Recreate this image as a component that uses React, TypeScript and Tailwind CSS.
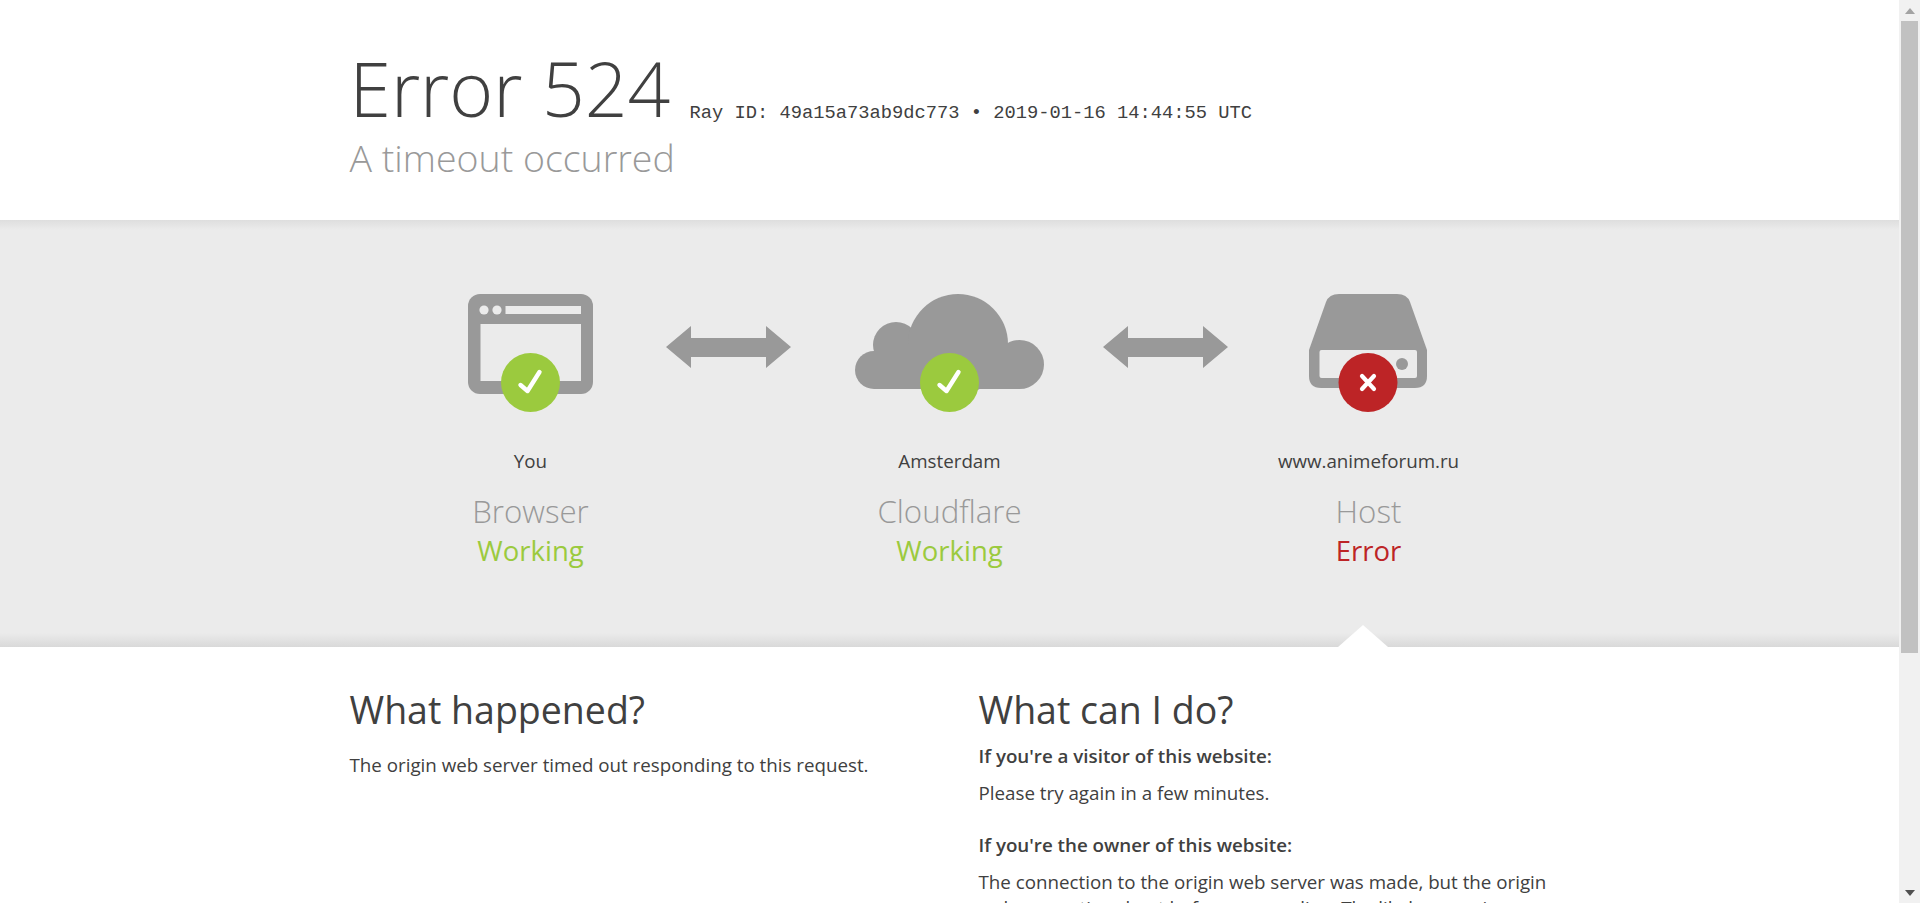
export default function App() {
  return (
    <div className="flex h-screen overflow-hidden bg-white font-['Open_Sans',sans-serif] text-[#404040]">
      <main className="h-full w-[1899px] shrink-0 overflow-hidden">
        {/* HEADER */}
        <header className="h-[220px] pt-[61px]">
          <div className="mx-auto w-[1200px]">
            <h1 className="flex items-baseline text-[75px] font-light leading-[54px]">
              Error 524
              <span className="relative top-[1px] ml-[19px] font-['Liberation_Mono',monospace] text-[18.75px] font-normal">
                Ray ID: 49a15a73ab9dc773 • 2019-01-16 14:44:55 UTC
              </span>
            </h1>
            <h2 className="text-[37.5px] font-light leading-[38px] text-[#999]">A timeout occurred</h2>
          </div>
        </header>

        {/* STATUS */}
        <section className="relative h-[427px] bg-[linear-gradient(to_bottom,#dedede,#ebebeb_10px,#ebebeb_calc(100%-14px),#d9d9d9)] pt-[74px]">
          <div className="ml-[468px] flex items-start">
            <BrowserIcon />
            <Arrow className="ml-[73px] mt-[32px]" />
            <CloudIcon />
            <Arrow className="ml-[59px] mt-[32px]" />
            <DriveIcon />
          </div>

          <div className="mx-auto mt-[35px] grid w-[1257px] grid-cols-3 text-center">
            <Status place="You" name="Browser" status="Working" color="text-[#9bca3e]" />
            <Status place="Amsterdam" name="Cloudflare" status="Working" color="text-[#9bca3e]" />
            <Status place="www.animeforum.ru" name="Host" status="Error" color="text-[#bd2426]" />
          </div>

          {/* notch under the host column */}
          <svg className="absolute bottom-0 left-[1338px] h-[22px] w-[50px]" viewBox="0 0 50 22">
            <polygon points="25,0 50,22 0,22" fill="#fff" />
          </svg>
        </section>

        {/* TEXT */}
        <section className="mx-auto grid w-[1200px] grid-cols-[571px_571px] gap-x-[58px] pt-[40px]">
          <div>
            <h2 className="text-[37.5px] font-normal leading-[46px]">What happened?</h2>
            <p className="mt-[18px] text-[18.75px] leading-[28px]">
              The origin web server timed out responding to this request.
            </p>
          </div>
          <div>
            <h2 className="text-[37.5px] font-normal leading-[46px]">What can I do?</h2>
            <h5 className="mt-[9px] text-[18.75px] font-semibold leading-[28px]">If you're a visitor of this website:</h5>
            <p className="mt-[9px] text-[18.75px] leading-[28px]">Please try again in a few minutes.</p>
            <h5 className="mt-[24px] text-[18.75px] font-semibold leading-[28px]">If you're the owner of this website:</h5>
            <p className="mt-[10px] text-[18.75px] leading-[26px]">
              The connection to the origin web server was made, but the origin web server timed out before responding. The
              likely cause is an overloaded background task, database or application, stressing the resources on your web
              server.
            </p>
          </div>
        </section>
      </main>

      {/* SCROLLBAR */}
      <aside className="relative h-full w-[21px] shrink-0 bg-[#f1f1f1]">
        <svg className="absolute left-[6px] top-[8px] h-[6px] w-[10px]" viewBox="0 0 10 6">
          <polygon points="5,0 10,6 0,6" fill="#a3a3a3" />
        </svg>
        <div className="ml-[2px] mt-[21px] h-[632px] w-[17px] bg-[#c1c1c1]" />
        <svg className="absolute bottom-[7px] left-[6px] h-[6px] w-[10px]" viewBox="0 0 10 6">
          <polygon points="0,0 10,0 5,6" fill="#505050" />
        </svg>
      </aside>
    </div>
  );
}

function Status({ place, name, status, color }: { place: string; name: string; status: string; color: string }) {
  return (
    <div>
      <div className="text-[18.75px] leading-[28px]">{place}</div>
      <div className="mt-[16px] text-[31.25px] font-light leading-[40px] text-[#999]">{name}</div>
      <div className={`text-[27.5px] leading-[40px] ${color}`}>{status}</div>
    </div>
  );
}

function Arrow({ className }: { className: string }) {
  return (
    <svg className={`h-[42px] w-[125px] shrink-0 ${className}`} viewBox="0 0 125 42">
      <polygon points="0,21 25,0 25,12 100,12 100,0 125,21 100,42 100,31 25,31 25,42" fill="#999" />
    </svg>
  );
}

function Check({ cx }: { cx: number }) {
  return (
    <>
      <circle cx={cx} cy="88.5" r="29.5" fill="#9bca3e" />
      <path
        d={`M${cx - 10} 91 L${cx - 3} 97 L${cx + 9} 78`}
        fill="none"
        stroke="#fff"
        strokeWidth="4.4"
        strokeLinecap="round"
        strokeLinejoin="round"
      />
    </>
  );
}

function BrowserIcon() {
  return (
    <svg className="h-[118px] w-[125px] shrink-0" viewBox="0 0 125 118">
      <rect x="0" y="0" width="125" height="100" rx="12" fill="#999" />
      <rect x="12.5" y="30" width="100.5" height="57" fill="#ebebeb" />
      <circle cx="16" cy="16" r="4.6" fill="#ebebeb" />
      <circle cx="29" cy="16" r="4.6" fill="#ebebeb" />
      <rect x="37.5" y="12" width="75.5" height="8" fill="#ebebeb" />
      <Check cx={62.5} />
    </svg>
  );
}

function CloudIcon() {
  return (
    <svg className="ml-[64px] h-[118px] w-[189px] shrink-0" viewBox="0 0 189 118">
      <circle cx="19" cy="76" r="19" fill="#999" />
      <circle cx="41" cy="51" r="23" fill="#999" />
      <circle cx="103" cy="50" r="50" fill="#999" />
      <circle cx="164.5" cy="70.5" r="24.5" fill="#999" />
      <rect x="19" y="50" width="146" height="45" fill="#999" />
      <Check cx={94.5} />
    </svg>
  );
}

function DriveIcon() {
  return (
    <svg className="ml-[81px] h-[118px] w-[118px] shrink-0" viewBox="0 0 118 118">
      <path d="M30 0 H88 Q98 0 101 8 L118 56 V82 Q118 94 106 94 H12 Q0 94 0 82 V56 L17 8 Q20 0 30 0 Z" fill="#999" />
      <rect x="10.5" y="56" width="97.5" height="28" rx="2" fill="#ebebeb" />
      <circle cx="93" cy="70" r="6" fill="#999" />
      <circle cx="59" cy="88.5" r="29.5" fill="#bd2426" />
      <path
        d="M53 82 L65 95 M65 82 L53 95"
        fill="none"
        stroke="#fff"
        strokeWidth="4.2"
        strokeLinecap="round"
      />
    </svg>
  );
}
